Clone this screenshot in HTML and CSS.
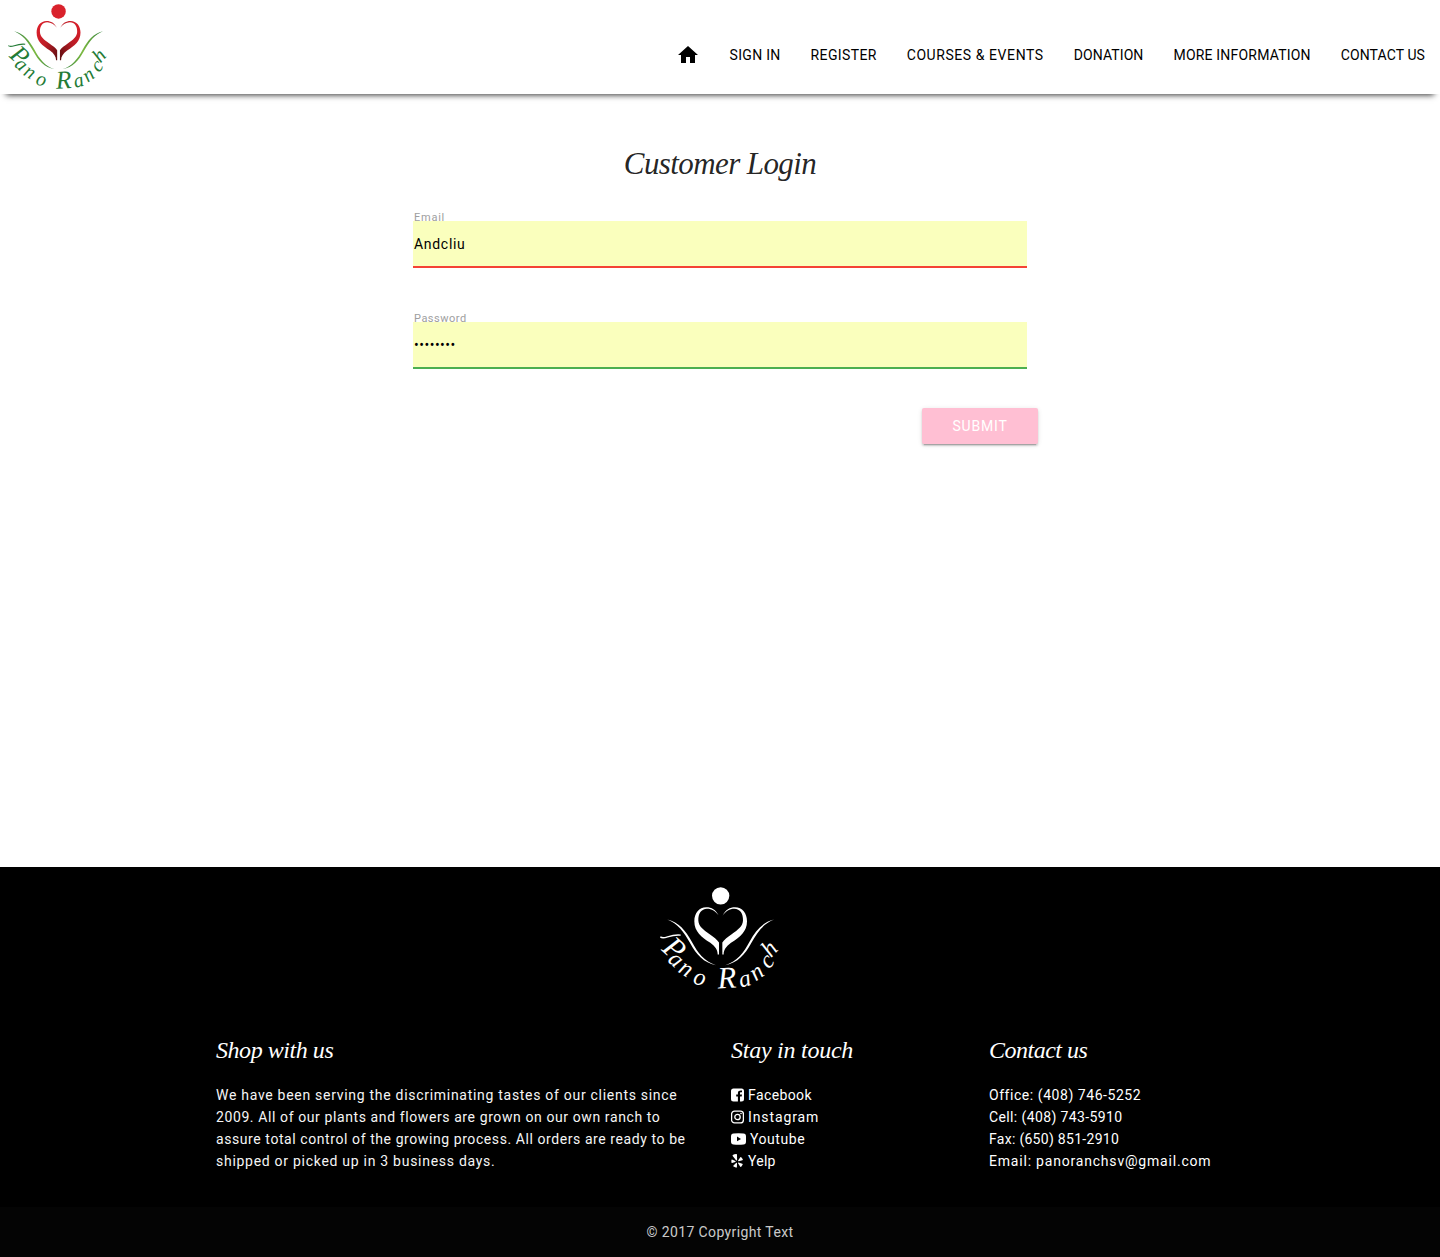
FILE: index.html
```html
<!DOCTYPE html>
<html lang="en">
<head>
<meta charset="utf-8">
<title>Pano Ranch - Customer Login</title>
<link rel="stylesheet" href="styles.css">
</head>
<body>
<svg class="defs" aria-hidden="true">
  <defs>
    <linearGradient id="heart-l" x1="0" y1="0" x2="1" y2="1"><stop offset="0" stop-color="#e01f2b"/><stop offset=".5" stop-color="#c01e27"/><stop offset="1" stop-color="#5c0d10"/></linearGradient>
    <linearGradient id="heart-r" x1="0" y1="1" x2="1" y2="0"><stop offset="0" stop-color="#5c0d10"/><stop offset=".5" stop-color="#b81c25"/><stop offset="1" stop-color="#e01f2b"/></linearGradient>
    <linearGradient id="leaf"><stop offset="0" stop-color="#2d7d38"/><stop offset=".5" stop-color="#7dba42"/><stop offset="1" stop-color="#2d7d38"/></linearGradient>
    <symbol id="logo" viewBox="30 20 360 308">
      <circle class="logo-head" cx="212" cy="46" r="26"/>
      <path class="logo-left" d="M206 105C197 87 185 80 169 80C147 80 133 98 133 122C133 153 154 169 181 187C196 198 203 209 203 222H207V186C202 177 190 169 179 161C159 147 146 138 145 120C144 100 154 85 171 85C185 85 197 93 206 105Z"/>
      <path class="logo-right" d="M218 105C227 87 239 80 255 80C277 80 291 98 291 122C291 153 270 169 243 187C228 198 221 209 221 222H217V186C222 177 234 169 245 161C265 147 278 138 279 120C280 100 270 85 253 85C239 85 227 93 218 105Z"/>
      <path class="logo-leaf" d="M52 117C86 125 107 150 125 183C143 217 163 243 198 254C161 247 139 222 121 189C101 153 83 129 52 117Z"/>
      <path class="logo-leaf" d="M372 117C338 125 317 150 299 183C281 217 261 243 226 254C263 247 285 222 303 189C323 153 341 129 372 117Z"/>
      <path class="logo-swash" d="M31 169C42 180 58 160 92 164"/>
      <text class="logo-text big" x="32" y="208" rotate="42">P</text>
      <text class="logo-text" x="50 82 127" y="241 273 308" rotate="42 32 14">ano</text>
      <text class="logo-text big" x="204" y="324" rotate="-3">R</text>
      <text class="logo-text" x="272 317 357 363" y="322 303 268 233" rotate="-15 -35 -50 -48">anch</text>
    </symbol>
  </defs>
</svg>

<header class="site-header">
  <a class="brand"><svg class="logo logo-color"><use href="#logo"/></svg></a>
  <nav class="nav">
    <a class="home"><svg viewBox="0 0 24 24"><path d="M10 20v-6h4v6h5v-8h3L12 3 2 12h3v8z"/></svg></a>
    <a class="n-sign">SIGN IN</a>
    <a class="n-reg">REGISTER</a>
    <a class="n-course">COURSES &amp; EVENTS</a>
    <a class="n-don">DONATION</a>
    <a class="n-info">MORE INFORMATION</a>
    <a class="n-contact">CONTACT US</a>
  </nav>
</header>

<main class="login">
  <h1>Customer Login</h1>
  <form>
    <div class="field">
      <label for="email">Email</label>
      <input id="email" class="invalid" type="text" value="Andcliu">
    </div>
    <div class="field">
      <label class="tight" for="password">Password</label>
      <input id="password" class="valid" type="text" value="••••••••">
    </div>
    <button class="submit" type="button">SUBMIT</button>
  </form>
</main>

<footer class="footer">
  <div class="footer-logo"><svg class="logo logo-white"><use href="#logo"/></svg></div>
  <div class="columns">
    <section>
      <h2 class="h-shop">Shop with us</h2>
      <p><span class="p1">We have been serving the discriminating tastes of our clients since</span><br><span class="p2">2009. All of our plants and flowers are grown on our own ranch to</span><br><span class="p3">assure total control of the growing process. All orders are ready to be</span><br><span class="p4">shipped or picked up in 3 business days.</span></p>
    </section>
    <section>
      <h2 class="h-stay">Stay in touch</h2>
      <ul>
        <li><svg class="icon" viewBox="0 0 13 14"><path fill-rule="evenodd" d="M2.5.5h8A2.5 2.5 0 0 1 13 3v8a2.5 2.5 0 0 1-2.5 2.5H9V8.500h1.700l.3-2H9V5.300c0-.6.2-1 1-1h1V2.500C9 2.200 6.900 2.700 6.900 5v1.500H5.200v2h1.700v5H2.500A2.500 2.500 0 0 1 0 11V3A2.500 2.500 0 0 1 2.500.5Z"/></svg><span class="s-fb">Facebook</span></li>
        <li><svg class="icon" viewBox="0 0 13 14"><rect class="line" x=".6" y="1.100" width="11.800" height="11.800" rx="3"/><circle class="line" cx="6.500" cy="7" r="2.700"/><circle cx="10" cy="3.500" r=".8"/></svg><span class="s-ig">Instagram</span></li>
        <li><svg class="icon icon-wide" viewBox="0 0 15 14"><path fill-rule="evenodd" d="M2.500 1.500Q7.500 1 12.500 1.500Q15 1.700 15 4.500V9.500Q15 12.300 12.500 12.500Q7.500 13 2.500 12.500Q0 12.300 0 9.500V4.500Q0 1.700 2.500 1.500ZM6 4.500V9.300L10 6.900Z"/></svg><span class="s-yt">Youtube</span></li>
        <li><svg class="icon" viewBox="0 0 13 14"><path d="M1.800 1.100Q3.600 0 5.400.1Q6 .2 6 1L6.100 6Q5.800 7 5 6.200L1.700 2Q1.400 1.400 1.800 1.100ZM1 5.500L4.400 7Q5 7.500 4.300 8L1 9Q.3 9 .4 8Q.3 6.800.5 5.800ZM5.300 8.700Q6.100 8.500 6 9.400L5.900 13.100Q5.600 13.900 4.800 13.600L2.500 12.600Q2 12.200 2.500 11.600ZM7.500 8.500L11.300 9.700Q12 10.100 11.600 10.800L10.200 12.700Q9.600 13.200 9.100 12.500L7 9.300Q6.800 8.600 7.500 8.500ZM7.100 6.400L9.300 3.300Q9.900 2.800 10.500 3.400L11.800 5.200Q12.100 5.900 11.400 6.200L7.700 7.200Q6.900 7.200 7.100 6.400Z"/></svg><span class="s-yelp">Yelp</span></li>
      </ul>
    </section>
    <section>
      <h2 class="h-contact">Contact us</h2>
      <p><span class="c1">Office: (408) 746-5252</span><br><span class="c2">Cell: (408) 743-5910</span><br><span class="c3">Fax: (650) 851-2910</span><br><span class="c4">Email: panoranchsv@gmail.com</span></p>
    </section>
  </div>
  <div class="copyright"><span>© 2017 Copyright Text</span></div>
</footer>
</body>
</html>
```
FILE: styles.css
```css
* { box-sizing: border-box; }
body {
  margin: 0;
  min-height: 1257px;
  display: flex;
  flex-direction: column;
  background: #fff;
  color: rgba(0, 0, 0, .87);
  font-family: Roboto, "Liberation Sans", sans-serif;
  font-size: 14px;
  line-height: 22px;
}
.defs { position: absolute; width: 0; height: 0; }

.site-header {
  height: 94px;
  padding: 4px 15px 0 8px;
  display: flex;
  justify-content: space-between;
  background: #fff;
  box-shadow: 0 7px 6px -6px rgba(0, 0, 0, .8);
}
.logo { display: block; overflow: visible; }
.logo-color {
  --head: #d9222c; --hl: url(#heart-l); --hr: url(#heart-r);
  --leaf: url(#leaf); --ink: #237b35;
  width: 100px;
  height: 86px;
}
.logo-white {
  --head: #fff; --hl: #fff; --hr: #fff; --leaf: #fff; --ink: #fff;
  width: 120px;
  height: 103px;
}
.logo-head { fill: var(--head); }
.logo-left { fill: var(--hl); }
.logo-right { fill: var(--hr); }
.logo-leaf { fill: var(--leaf); }
.logo-text { fill: var(--ink); font: italic 72px "Liberation Serif", serif; }
.logo-text.big { font-size: 92px; }
.logo-swash { fill: none; stroke: var(--ink); stroke-width: 4; }

.nav {
  display: flex;
  align-items: center;
  gap: 30px;
  height: 22px;
  margin-top: 40px;
  color: #000;
  white-space: nowrap;
}
.home, .home svg { display: block; width: 24px; height: 24px; }
.n-sign { letter-spacing: .29px; }
.n-reg { letter-spacing: .37px; }
.n-course { letter-spacing: .57px; }
.n-don { letter-spacing: .1px; }
.n-info { letter-spacing: .2px; }
.n-contact { letter-spacing: .1px; }

.login { flex: 1; width: 614px; margin: 0 auto; }
h1, h2 {
  margin: 0;
  font-family: "Liberation Serif", serif;
  font-style: italic;
  font-weight: 400;
  white-space: nowrap;
}
h1 {
  margin-top: 47px;
  height: 44px;
  font-size: 31px;
  line-height: 46px;
  letter-spacing: -.6px;
  text-align: center;
}
form { display: flex; flex-direction: column; margin-top: 24px; }
.field { height: 59px; margin-bottom: 42px; }
.field label {
  display: block;
  height: 12px;
  padding-left: 1px;
  color: #9e9e9e;
  font-size: 11px;
  line-height: 18px;
  letter-spacing: .75px;
}
.field label.tight { letter-spacing: .5px; }
.field input {
  display: block;
  position: relative;
  width: 614px;
  height: 47px;
  padding: 0 1px;
  border: 0;
  border-bottom: 2px solid #f44336;
  border-radius: 0;
  outline: 0;
  background: #faffbd;
  color: #000;
  font: 14px Roboto, sans-serif;
  letter-spacing: .7px;
}
.field input.valid { border-color: #4caf50; letter-spacing: .5px; }
.submit {
  align-self: flex-end;
  width: 116px;
  height: 36px;
  margin: -3px -11px 0 0;
  padding: 0;
  border: 0;
  border-radius: 2px;
  background: #ffbfd3;
  box-shadow: 0 2px 2px 0 rgba(0, 0, 0, .14), 0 1px 5px 0 rgba(0, 0, 0, .12), 0 3px 1px -2px rgba(0, 0, 0, .2);
  color: #fff;
  font: 400 14px Roboto, sans-serif;
  letter-spacing: .8px;
}

.footer { height: 390px; background: #000; color: #fff; }
.footer-logo { display: flex; justify-content: center; padding-top: 20px; height: 160px; }
.columns {
  display: grid;
  grid-template-columns: 515px 258px 1fr;
  width: 1008px;
  height: 180px;
  margin: 0 auto;
  white-space: nowrap;
}
h2 { height: 57px; padding-top: 6px; font-size: 24px; line-height: 34px; }
.h-shop { letter-spacing: -.45px; }
.h-stay { letter-spacing: -.25px; }
.h-contact { letter-spacing: -.5px; }
p, ul { margin: 0; padding: 0; list-style: none; }
p { color: #f5f5f5; }
section:last-child p, ul { color: #fff; }
.p1 { letter-spacing: .71px; }
.p2 { letter-spacing: .6px; }
.p3 { letter-spacing: .58px; }
.p4 { letter-spacing: .72px; }
.c1 { letter-spacing: .55px; }
.c2 { letter-spacing: .38px; }
.c3 { letter-spacing: .29px; }
.c4 { letter-spacing: .8px; }
li { display: flex; align-items: center; gap: 4px; height: 22px; }
.s-fb { letter-spacing: .4px; }
.s-ig { letter-spacing: .9px; }
.s-yt { letter-spacing: .55px; }
.s-yelp { letter-spacing: .25px; }
.icon { width: 13px; height: 14px; fill: #fff; }
.icon-wide { width: 15px; }
.icon .line { fill: none; stroke: #fff; stroke-width: 1.3; }
.copyright {
  height: 50px;
  background: #040404;
  color: rgba(255, 255, 255, .8);
  line-height: 50px;
  letter-spacing: .38px;
  text-align: center;
}
```
